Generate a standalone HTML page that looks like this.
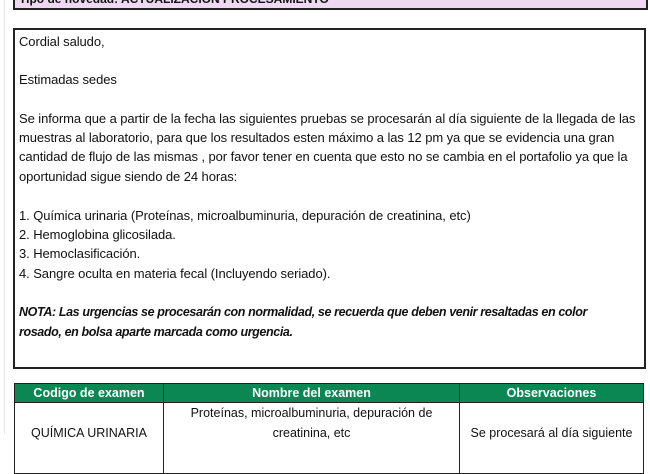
<!DOCTYPE html>
<html><head><meta charset="utf-8"><style>
body{margin:0;width:650px;height:434px;overflow:hidden;background:#fff;font-family:"Liberation Sans",sans-serif;color:#111;position:relative}
.edge{position:absolute;left:4px;top:0;width:1px;height:434px;background:#e4e4e4}
.top{position:absolute;left:13px;top:-12px;width:627px;height:18px;background:#efd8f2;border:2px solid #222;font-weight:bold;font-size:12px;line-height:18px;padding-left:4px;box-sizing:content-box}
.box{position:absolute;left:13px;top:28px;width:629px;height:337px;border:2px solid #222}
.l{position:absolute;left:4px;font-size:13px;white-space:nowrap;letter-spacing:-0.08px}
.i{font-style:italic;font-weight:bold;font-size:12.5px;letter-spacing:-0.38px}
table{position:absolute;left:14px;top:383px;border-collapse:collapse;font-size:12.5px}
th{background:#0b8754;color:#fff;height:18px;padding:0;border:1px solid #222;font-weight:bold}
td{border:1px solid #222;text-align:center;vertical-align:top;padding:0;line-height:20px}
</style></head><body>
<div class="edge"></div>
<div class="top">Tipo de novedad: ACTUALIZACIÓN PROCESAMIENTO</div>
<div class="box">
<div class="l" style="top:4px">Cordial saludo,</div>
<div class="l" style="top:42px">Estimadas sedes</div>
<div class="l" style="top:81px">Se informa que a partir de la fecha las siguientes pruebas se procesarán al día siguiente de la llegada de las</div>
<div class="l" style="top:100px">muestras al laboratorio, para que los resultados esten máximo a las 12 pm ya que se evidencia una gran</div>
<div class="l" style="top:119px">cantidad de flujo de las mismas , por favor tener en cuenta que esto no se cambia en el portafolio ya que la</div>
<div class="l" style="top:139px">oportunidad sigue siendo de 24 horas:</div>
<div class="l" style="top:178px">1. Química urinaria (Proteínas, microalbuminuria, depuración de creatinina, etc)</div>
<div class="l" style="top:197px">2. Hemoglobina glicosilada.</div>
<div class="l" style="top:216px">3. Hemoclasificación.</div>
<div class="l" style="top:236px">4. Sangre oculta en materia fecal (Incluyendo seriado).</div>
<div class="l i" style="top:275px">NOTA: Las urgencias se procesarán con normalidad, se recuerda que deben venir resaltadas en color</div>
<div class="l i" style="top:295px">rosado, en bolsa aparte marcada como urgencia.</div>
</div>
<table>
<tr><th style="width:148px">Codigo de examen</th><th style="width:295px">Nombre del examen</th><th style="width:183px">Observaciones</th></tr>
<tr><td style="padding-top:20px;height:50px">QUÍMICA URINARIA</td><td style="padding-top:0">Proteínas, microalbuminuria, depuración de<br>creatinina, etc</td><td style="padding-top:20px">Se procesará al día siguiente</td></tr>
</table>
</body></html>
